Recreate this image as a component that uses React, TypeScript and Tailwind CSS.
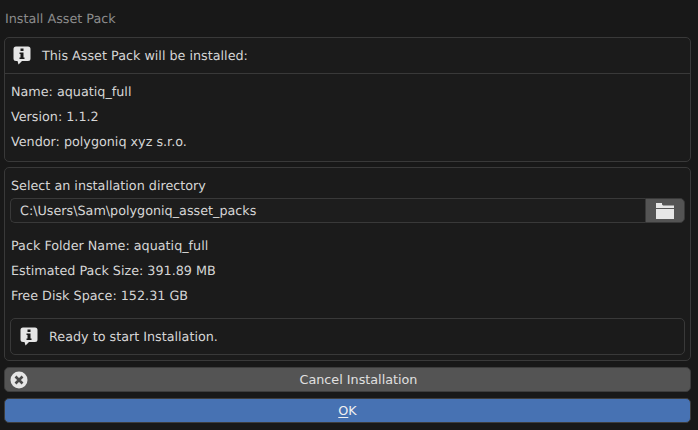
import React from 'react';

const InfoIcon: React.FC = () => (
  <svg width="18" height="19" viewBox="0 0 18 19" className="shrink-0">
    <path d="M3 0.5H15A2.5 2.5 0 0 1 17.5 3V12.5A2.5 2.5 0 0 1 15 15H9L5.5 18.5L4.5 15H3A2.5 2.5 0 0 1 0.5 12.5V3A2.5 2.5 0 0 1 3 0.5Z" fill="#e6e6e6" />
    <rect x="7.5" y="2.5" width="3" height="2.5" fill="#1a1a1a" />
    <path d="M6.5 6.5H10.5V11.5H11.5V13H6.5V11.5H7.5V8H6.5Z" fill="#1a1a1a" />
  </svg>
);

const CloseIcon: React.FC = () => (
  <svg width="18" height="18" viewBox="0 0 18 18" className="shrink-0">
    <circle cx="9" cy="9" r="8.5" fill="#e6e6e6" />
    <path d="M5.5 5.5L12.5 12.5M12.5 5.5L5.5 12.5" stroke="#4a4a4a" strokeWidth="2.6" />
  </svg>
);

const FolderIcon: React.FC = () => (
  <svg width="18" height="16" viewBox="0 0 18 16">
    <path d="M0 0H6V1.5L7 2.5H18V5H0Z" fill="#e6e6e6" />
    <rect x="0" y="6" width="18" height="10" fill="#e6e6e6" />
  </svg>
);

const Row: React.FC<{ children: React.ReactNode }> = ({ children }) => (
  <div className="h-[25px] pl-px pt-px leading-[25px] text-[#d6d6d6]">{children}</div>
);

export default function App() {
  return (
    <div
      className="w-[698px] h-[430px] overflow-hidden bg-[#181818] px-1 text-[12.75px] [text-rendering:geometricPrecision]"
      style={{ fontFamily: '"DejaVu Sans", sans-serif' }}
    >
      <div className="h-[37px] pl-px pt-[11px] leading-[18px] text-[#8c8c8c]">Install Asset Pack</div>

      <section className="w-[687px] h-[125px] rounded-[5px] border border-[#393939] bg-[#1b1b1b]">
        <div className="h-[36px] flex items-center gap-[11px] pl-[8px] border-b border-[#393939] text-[#d6d6d6]">
          <InfoIcon />
          <span className="pt-[2px]">This Asset Pack will be installed:</span>
        </div>
        <div className="px-[5px] pt-[5px]">
          <Row>Name: aquatiq_full</Row>
          <Row>Version: 1.1.2</Row>
          <Row>Vendor: polygoniq xyz s.r.o.</Row>
        </div>
      </section>

      <section className="mt-[5px] w-[687px] h-[194px] rounded-[5px] border border-[#393939] bg-[#1b1b1b] px-[5px] pt-[5px]">
        <Row>Select an installation directory</Row>
        <div className="flex h-[25px]">
          <div className="w-[635px] rounded-l-[5px] border border-r-0 border-[#393939] bg-[#1d1d1d] pl-[9px] leading-[25px] text-[#d6d6d6]">
            C:\Users\Sam\polygoniq_asset_packs
          </div>
          <div className="w-[40px] flex items-center justify-center rounded-r-[5px] border border-[#393939] bg-[#545454]">
            <FolderIcon />
          </div>
        </div>
        <div className="mt-[10px]">
          <Row>Pack Folder Name: aquatiq_full</Row>
          <Row>Estimated Pack Size: 391.89 MB</Row>
          <Row>Free Disk Space: 152.31 GB</Row>
        </div>
        <div className="mt-[10px] h-[37px] flex items-center gap-[11px] pl-[9px] rounded-[5px] border border-[#393939] text-[#d6d6d6]">
          <InfoIcon />
          <span className="pt-[2px]">Ready to start Installation.</span>
        </div>
      </section>

      <button className="relative mt-[6px] block w-[687px] h-[25px] rounded-[5px] border border-[#3d3d3d] bg-[#545454] pl-[22px] text-center leading-[23px] text-[#e0e0e0]">
        <span className="absolute left-[5px] top-[3px]">
          <CloseIcon />
        </span>
        Cancel Installation
      </button>

      <button className="mt-[6px] block w-[687px] h-[25px] rounded-[5px] border border-[#3d3d3d] bg-[#4772b3] text-center leading-[23px] text-[#f0f0f0]">
        <span className="underline underline-offset-2">O</span>K
      </button>
    </div>
  );
}
